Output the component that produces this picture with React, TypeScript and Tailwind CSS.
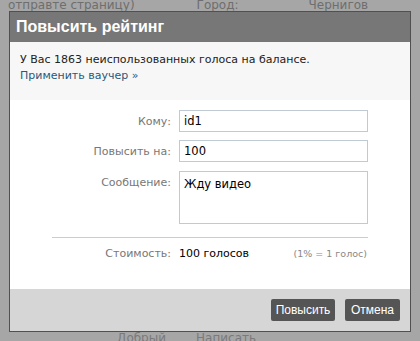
export default function App() {
  return (
    <div
      className="relative h-[341px] w-[420px] overflow-hidden bg-[#a6a6a6] text-[11px]"
      style={{ fontFamily: '"DejaVu Sans", Verdana, sans-serif' }}
    >
      {/* dimmed page behind */}
      <div className="absolute left-0 top-0 flex h-[11px] w-full items-end text-[12px] text-[#6e6e6e]">
        <span className="ml-[8px] leading-none">отправте страницу)</span>
        <span className="ml-[62px] leading-none">Город:</span>
        <span className="ml-[70px] leading-none">Чернигов</span>
      </div>
      <div className="absolute bottom-0 left-0 flex h-[9px] w-full text-[12px] text-[#7a7a7a]">
        <span className="ml-[117px] leading-none">Добрый</span>
        <span className="ml-[30px] leading-none">Написать</span>
      </div>

      {/* dialog */}
      <div className="absolute left-[9px] top-[11px] w-[402px] border border-[#505050] bg-white">
        <div className="flex h-[30px] items-center bg-[#777777] px-[6px]">
          <h1
            className="text-[16px] font-bold text-white"
            style={{ fontFamily: '"Liberation Sans", Arial, sans-serif' }}
          >
            Повысить рейтинг
          </h1>
        </div>

        <div className="bg-[#f7f7f7] px-[10px] pb-[16px] pt-[10px] leading-[16px] text-[#222]">
          <p>У Вас 1863 неиспользованных голоса на балансе.</p>
          <a className="text-[#2b587a]">Применить ваучер »</a>
        </div>

        <div className="px-[42px] pt-[10px]">
          <div className="flex flex-col">
            <div className="flex items-start">
              <label className="w-[127px] pr-[8px] pt-[4px] text-right text-[#777]">Кому:</label>
              <input
                defaultValue="id1"
                className="h-[22px] w-[189px] border border-[#c0cad5] px-[4px] text-[11.5px] text-black outline-none"
              />
            </div>
            <div className="mt-[8px] flex items-start">
              <label className="w-[127px] pr-[8px] pt-[4px] text-right text-[#777]">Повысить на:</label>
              <input
                defaultValue="100"
                className="h-[22px] w-[189px] border border-[#c0cad5] px-[4px] text-[11.5px] text-black outline-none"
              />
            </div>
            <div className="mt-[9px] flex items-start">
              <label className="w-[127px] pr-[8px] pt-[4px] text-right text-[#777]">Сообщение:</label>
              <textarea
                defaultValue="Жду видео"
                className="h-[53px] w-[189px] resize-none border border-[#c0cad5] px-[4px] py-[4px] text-[11.5px] text-black outline-none"
              />
            </div>
          </div>

          <div className="mt-[13px] border-t border-[#cccccc]" />

          <div className="flex h-[32px] items-center">
            <span className="w-[127px] pr-[8px] text-right text-[#777]">Стоимость:</span>
            <span className="text-black">100 голосов</span>
            <span className="ml-auto pr-[1px] text-[9.5px] text-[#888]">(1% = 1 голос)</span>
          </div>
        </div>

        <div
          className="mt-[19px] flex h-[42px] items-center justify-end gap-[10px] bg-[#d6d6d6] pr-[10px] text-[12px]"
          style={{ fontFamily: '"Liberation Sans", Arial, sans-serif' }}
        >
          <button className="h-[22px] w-[64px] rounded-[2px] bg-[#555555] text-white">Повысить</button>
          <button className="h-[22px] w-[55px] rounded-[2px] bg-[#555555] text-white">Отмена</button>
        </div>
      </div>
    </div>
  );
}
